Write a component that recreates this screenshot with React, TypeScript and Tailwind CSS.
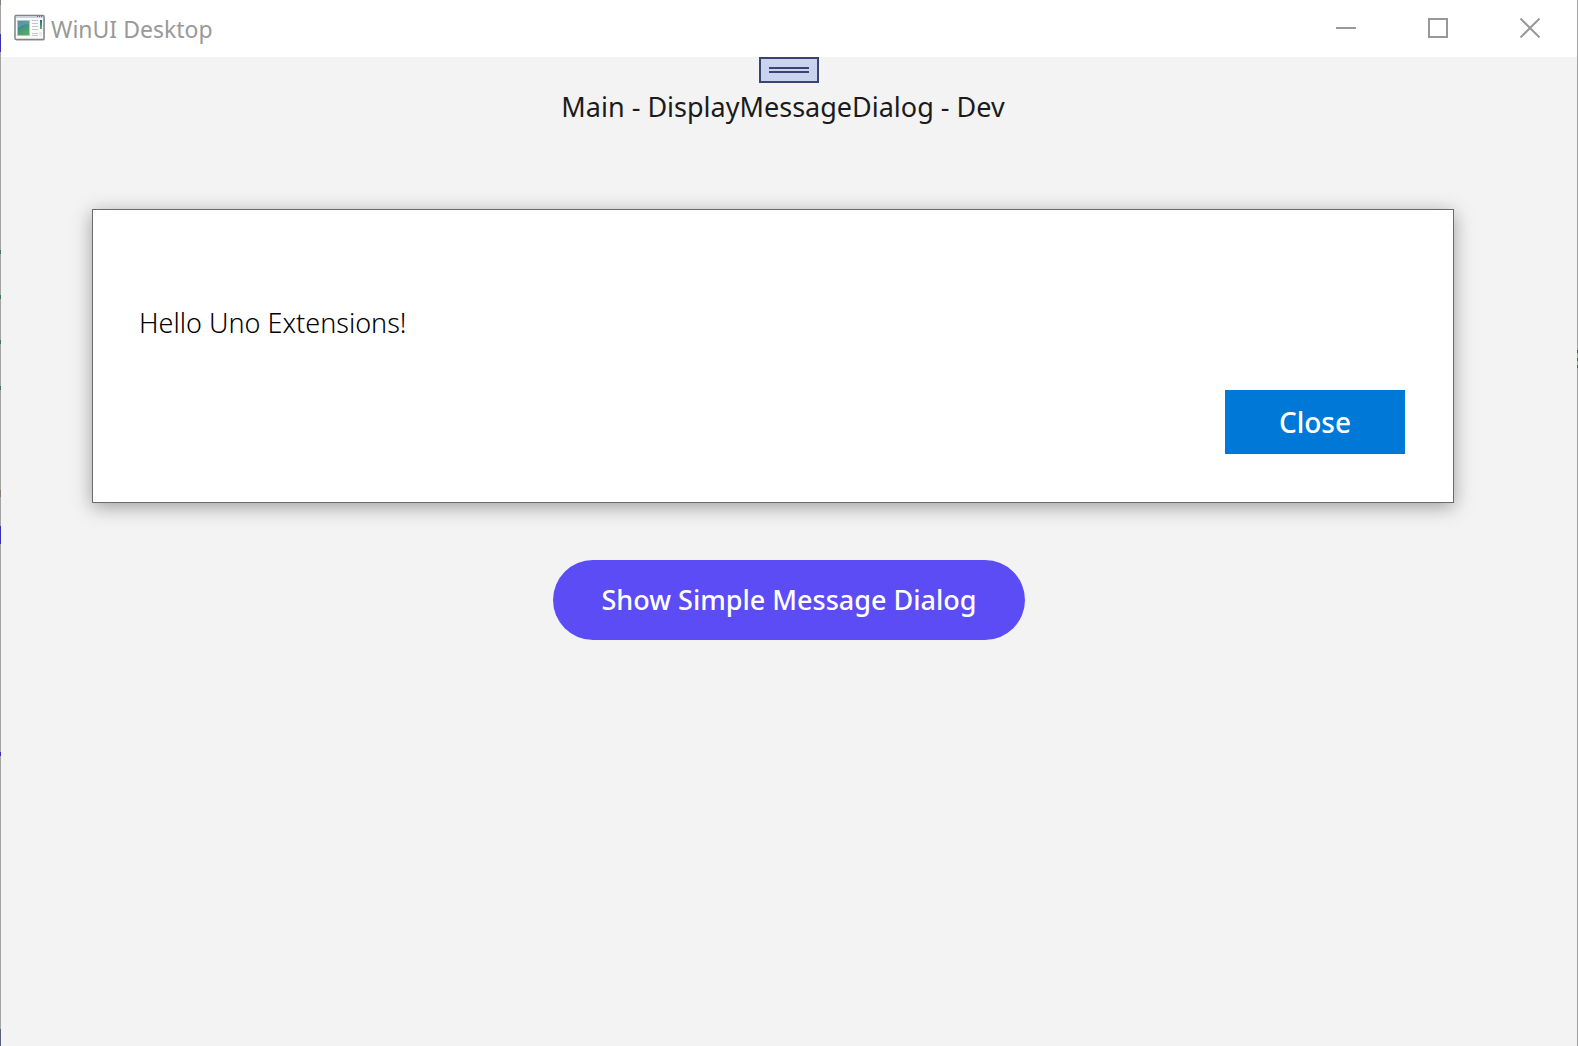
const sans = "font-['Noto_Sans','Open_Sans',sans-serif]";

function AppIcon() {
  return (
    <svg width="32" height="28" viewBox="0 0 32 28" aria-hidden="true">
      <defs>
        <linearGradient id="pane" x1="0" y1="0" x2="0.5" y2="1">
          <stop offset="0" stopColor="#3f76ad" />
          <stop offset="0.5" stopColor="#438f88" />
          <stop offset="1" stopColor="#55ab60" />
        </linearGradient>
        <linearGradient id="bar" x1="0" y1="0" x2="0" y2="1">
          <stop offset="0" stopColor="#2c5f9e" />
          <stop offset="1" stopColor="#57b560" />
        </linearGradient>
      </defs>
      <rect x="2" y="3" width="29" height="24" rx="1" fill="#dcdedf" />
      <rect x="1" y="1.5" width="29" height="24" rx="1" fill="#fafafa" stroke="#7d8588" strokeWidth="1.5" />
      <rect x="2" y="2" width="27" height="2" fill="#cbd3da" />
      <path d="M23 2.5h1M25 2.5h1M27 2.5h1" stroke="#5d6d7d" />
      <rect x="3.5" y="6.5" width="12" height="15" fill="url(#pane)" stroke="#b8c4cc" />
      <path d="M4 7h11v3Q9 10 4 14Z" fill="#fff" opacity="0.15" />
      <path d="M18 6.5h6M18 9.5h6M18 12.5h6M18 15.5h6M18 19.5h6M18 21.5h6" stroke="#c4c6c7" />
      <rect x="26" y="6" width="2" height="9" fill="url(#bar)" />
      <rect x="25" y="18" width="3" height="4" fill="#ececec" />
    </svg>
  );
}

const caption = "flex h-14 w-[92px] items-center justify-center text-[#999]";

const edgeMarks = [
  { top: 0, height: 5, color: "#877d75" },
  { top: 34, height: 18, color: "#3a30b0" },
  { top: 250, height: 4, color: "#3d7d55" },
  { top: 295, height: 4, color: "#3d7d55" },
  { top: 340, height: 4, color: "#3d7d55" },
  { top: 386, height: 4, color: "#3d7d55" },
  { top: 490, height: 7, color: "#8c7c74" },
  { top: 526, height: 18, color: "#3a30b0" },
  { top: 752, height: 4, color: "#3a30b0" },
  { top: 1029, height: 17, color: "#5a5f80" },
];

const rightEdgeMarks = [350, 358, 365];

export default function App() {
  return (
    <div className={`relative flex min-h-screen flex-col border-x border-[#a3a3a3] bg-[#f3f3f3] ${sans}`}>
      {edgeMarks.map((m) => (
        <span
          key={m.top}
          className="absolute -left-px w-px"
          style={{ top: m.top, height: m.height, backgroundColor: m.color }}
        />
      ))}
      {rightEdgeMarks.map((top) => (
        <span key={top} className="absolute -right-px h-[3px] w-px bg-[#2f6b35]" style={{ top }} />
      ))}
      <header className="flex h-[57px] justify-between bg-white">
        <div className="flex h-14 items-center gap-[5px] pl-[13px]">
          <AppIcon />
          <span className="pt-[2px] text-[23px] leading-8 text-[#999]">WinUI Desktop</span>
        </div>
        <div className="flex pr-px">
          <button type="button" aria-label="Minimize" className={caption}>
            <svg width="20" height="20" viewBox="0 0 20 20"><path d="M0 10H20" stroke="currentColor" strokeWidth="2" /></svg>
          </button>
          <button type="button" aria-label="Maximize" className={caption}>
            <svg width="20" height="20" viewBox="0 0 20 20"><path d="M1 1H19V19H1Z" fill="none" stroke="currentColor" strokeWidth="2" /></svg>
          </button>
          <button type="button" aria-label="Close window" className={caption}>
            <svg width="20" height="20" viewBox="0 0 20 20"><path d="M0.5 0.5L19.5 19.5M19.5 0.5L0.5 19.5" stroke="currentColor" strokeWidth="2" /></svg>
          </button>
        </div>
      </header>
      <main className="relative flex flex-1 flex-col items-center">
        <div className="flex h-[97px] flex-col items-center">
          <button type="button" aria-label="Developer toolbar" className="flex h-[26px] w-[60px] flex-col items-center justify-center gap-[2px] border-2 border-[#3b4372] bg-[#cad4ef]">
            <span className="h-[2px] w-10 bg-[#3b4372]" />
            <span className="h-[2px] w-10 bg-[#3b4372]" />
          </button>
          <h1 className="mt-[6px] pr-3 text-[27px] leading-9 text-[#1b1b1b]">Main - DisplayMessageDialog - Dev</h1>
        </div>
        <div className="flex flex-1 items-center">
          <button type="button" className="h-20 rounded-full bg-[#5b4cf5] px-12 text-[27px] font-medium text-white">
            Show Simple Message Dialog
          </button>
        </div>
        <section role="dialog" aria-label="Message" className="absolute top-[152px] right-[123px] left-[91px] flex flex-col border border-[#6b6b6b] bg-white pt-[93px] pr-12 pb-12 pl-[46px] shadow-[0_4px_18px_rgba(0,0,0,0.35)]">
          <p className="text-[27px] leading-10 font-light text-black">Hello Uno Extensions!</p>
          <button type="button" className="mt-[47px] h-16 w-[180px] self-end bg-[#0078d7] text-[28px] font-medium text-white">
            Close
          </button>
        </section>
      </main>
    </div>
  );
}
